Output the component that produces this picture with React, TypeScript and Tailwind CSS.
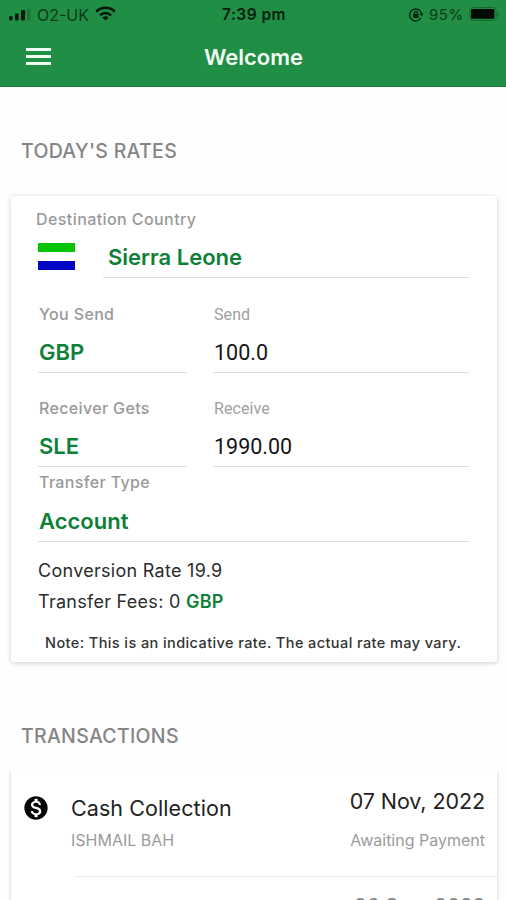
import React from "react";
import { MdMonetizationOn } from "react-icons/md";

type FieldProps = {
  label: string;
  value: string;
  plain?: boolean;
};

type Transaction = {
  title: string;
  name: string;
  date: string;
  status: string;
};

const transaction: Transaction = {
  title: "Cash Collection",
  name: "ISHMAIL BAH",
  date: "07 Nov, 2022",
  status: "Awaiting Payment",
};

const nextDate = "26 Sep, 2022";

const StatusBar: React.FC = () => {
  return (
    <div className="flex h-7 items-center justify-between pl-[9px] pr-[6px] pt-[1px] text-[#0b3a19]">
      <div className="flex w-[150px] items-center">
        <svg width="22" height="12" viewBox="0 0 22 12" fill="#06180b">
          <rect x="0" y="7" width="3.6" height="4.5" rx="1.6" />
          <rect x="6" y="4.5" width="3.6" height="7" rx="1" />
          <rect x="12" y="1" width="4" height="10.5" rx="1" />
          <rect x="18" y="0" width="3.6" height="11.5" rx="1" opacity="0.2" />
        </svg>
        <span className="ml-[6px] w-[53px] whitespace-nowrap text-[16px] leading-5">
          O2-UK
        </span>
        <svg
          className="-mt-[2px] ml-[5px]"
          width="21"
          height="15"
          viewBox="0 0 21 15"
          fill="none"
          stroke="#06180b"
          strokeWidth="2.6"
        >
          <path d="M1.2 5.6a13.2 13.2 0 0 1 18.6 0" />
          <path d="M5 9.3a7.8 7.8 0 0 1 11 0" />
          <path d="M10.5 14.6 7.4 11.5a4.4 4.4 0 0 1 6.2 0z" fill="#06180b" stroke="none" />
        </svg>
      </div>
      <span className="-ml-[1px] whitespace-nowrap text-[15.5px] font-semibold leading-5 tracking-[0.45px] text-[#06210e]">
        7:39 pm
      </span>
      <div className="flex w-[150px] items-center justify-end">
        <svg width="15" height="14" viewBox="0 0 15 14" fill="none" stroke="#06210e" strokeWidth="1.3">
          <path d="M12 9.8A6 6 0 1 1 12.6 6" />
          <path d="M10.6 5.6h4l-2 2.8z" fill="#06210e" stroke="none" />
          <rect x="4.2" y="6" width="5.4" height="4" fill="#06210e" stroke="none" />
          <path d="M5.3 6.4V5.2a1.6 1.6 0 0 1 3.2 0v1.2" />
        </svg>
        <span className="ml-[5px] w-[36px] whitespace-nowrap text-[15px] leading-5 tracking-[0.5px]">
          95%
        </span>
        <svg className="-mt-[2px] ml-[4px]" width="31" height="14" viewBox="0 0 31 14">
          <rect x="0.6" y="0.6" width="26.6" height="12.8" rx="3" fill="none" stroke="#17662f" strokeWidth="1" />
          <rect x="2" y="2" width="23.4" height="9.8" rx="1.2" fill="#020a04" />
          <path d="M28.8 5v4q1.5-.6 1.5-2t-1.5-2z" fill="#17662f" />
        </svg>
      </div>
    </div>
  );
};

const Header: React.FC = () => {
  return (
    <div className="relative flex h-[59px] items-center justify-center border-b border-[#17803a]">
      <button className="absolute left-[26px] top-[20px] flex flex-col gap-[4px]">
        <span className="h-[3px] w-[25px] bg-[#effaf0]" />
        <span className="h-[3px] w-[25px] bg-[#effaf0]" />
        <span className="h-[3px] w-[25px] bg-[#effaf0]" />
      </button>
      <h1 className="pl-px text-[22px] font-semibold leading-7 text-[#f1fbf1]">
        Welcome
      </h1>
    </div>
  );
};

const Field: React.FC<FieldProps> = ({ label, value, plain }) => {
  return (
    <div className="flex h-full flex-col justify-between border-b border-[#dcdcdc] pl-px">
      {plain ? (
        <>
          <span className="pt-px font-[Roboto] text-[16px] leading-5 tracking-[0.1px] text-[#a0a0a0]">
            {label}
          </span>
          <span className="pb-[7px] font-[Roboto] text-[21.5px] leading-6 text-[#151515]">
            {value}
          </span>
        </>
      ) : (
        <>
          <span className="text-[16px] font-medium leading-5 tracking-[0.35px] text-[#999999]">
            {label}
          </span>
          <span className="pb-[8px] text-[22px] font-semibold leading-6 text-[#0f8038]">
            {value}
          </span>
        </>
      )}
    </div>
  );
};

const RatesCard: React.FC = () => {
  return (
    <div className="ml-[11px] mr-[9px] h-[466px] rounded-[3px] bg-white pl-[27px] pr-[28px] pt-[13px] shadow-[0_1px_5px_rgba(0,0,0,0.2)]">
      <div className="-ml-[2px] text-[16px] font-medium leading-5 tracking-[0.42px] text-[#999999]">
        Destination Country
      </div>
      <div className="flex h-[49px] justify-between">
        <div className="mt-[14px] flex h-[27px] w-[37px] flex-col justify-between">
          <div className="h-[9px] bg-[#05c405]" />
          <div className="h-[9px] bg-[#0505c4]" />
        </div>
        <div className="w-[366px] border-b border-[#dcdcdc] pl-[5px] pt-[16px] text-[22px] font-semibold leading-6 text-[#0f8038]">
          Sierra Leone
        </div>
      </div>
      <div className="mt-[26px] grid grid-cols-[149px_256px] justify-between">
        <div className="h-[69px]">
          <Field label="You Send" value="GBP" />
        </div>
        <div className="h-[69px]">
          <Field label="Send" value="100.0" plain />
        </div>
        <div className="mt-[25px] h-[69px]">
          <Field label="Receiver Gets" value="SLE" />
        </div>
        <div className="mt-[25px] h-[69px]">
          <Field label="Receive" value="1990.00" plain />
        </div>
      </div>
      <div className="mt-[5px] h-[70px]">
        <Field label="Transfer Type" value="Account" />
      </div>
      <div className="mt-[19px] text-[18px] leading-5 tracking-[0.28px] text-[#2c2c2c]">
        Conversion Rate 19.9
      </div>
      <div className="mt-[11px] text-[18px] leading-5 tracking-[0.28px] text-[#2c2c2c]">
        Transfer Fees: 0{" "}
        <span className="font-semibold text-[#0f8038]">GBP</span>
      </div>
      <div className="mt-[21px] whitespace-nowrap pl-[7px] text-[14.5px] font-medium leading-5 tracking-[0.41px] text-[#333333]">
        Note: This is an indicative rate. The actual rate may vary.
      </div>
    </div>
  );
};

const TransactionRow: React.FC<Transaction> = ({ title, name, date, status }) => {
  return (
    <div className="flex h-[105px] pl-[11px]">
      <MdMonetizationOn className="mt-[23px] size-[28px] text-[#050505]" />
      <div className="ml-[21px] pt-[23px]">
        <div className="text-[21.5px] leading-7 tracking-[0.08px] text-[#222222]">{title}</div>
        <div className="mt-[8px] text-[16px] leading-5 text-[#9b9b9b]">{name}</div>
      </div>
      <div className="ml-auto pr-[12px] pt-[16px] text-right">
        <div className="text-[21.5px] leading-7 tracking-[-0.08px] text-[#222222]">{date}</div>
        <div className="mt-[15px] text-[16px] leading-5 text-[#9b9b9b]">{status}</div>
      </div>
    </div>
  );
};

const App: React.FC = () => {
  return (
    <div className="flex h-[900px] w-[506px] flex-col overflow-hidden bg-[#fefefe] font-[Inter,sans-serif]">
      <div className="bg-[#218e46]">
        <StatusBar />
        <Header />
      </div>
      <h2 className="mt-[52px] pl-[21px] text-[19.5px] font-medium leading-6 tracking-[0.3px] text-[#858585]">
        TODAY'S RATES
      </h2>
      <div className="mt-[33px]">
        <RatesCard />
      </div>
      <h2 className="mt-[62px] pl-[21px] text-[19.5px] font-medium leading-6 tracking-[0.3px] text-[#858585]">
        TRANSACTIONS
      </h2>
      <div className="mt-[23px] flex-1 overflow-hidden pl-[11px] pr-[9px]">
        <div className="bg-white shadow-[0_1px_4px_rgba(0,0,0,0.2)]">
          <TransactionRow {...transaction} />
          <div className="ml-[65px] h-px bg-[#e9e9e9]" />
          <div className="h-[105px] pr-[12px] pt-[15px] text-right text-[21.5px] leading-7 tracking-[-0.5px] text-[#8a8a8a]">
            {nextDate}
          </div>
        </div>
      </div>
    </div>
  );
};

export default App;
